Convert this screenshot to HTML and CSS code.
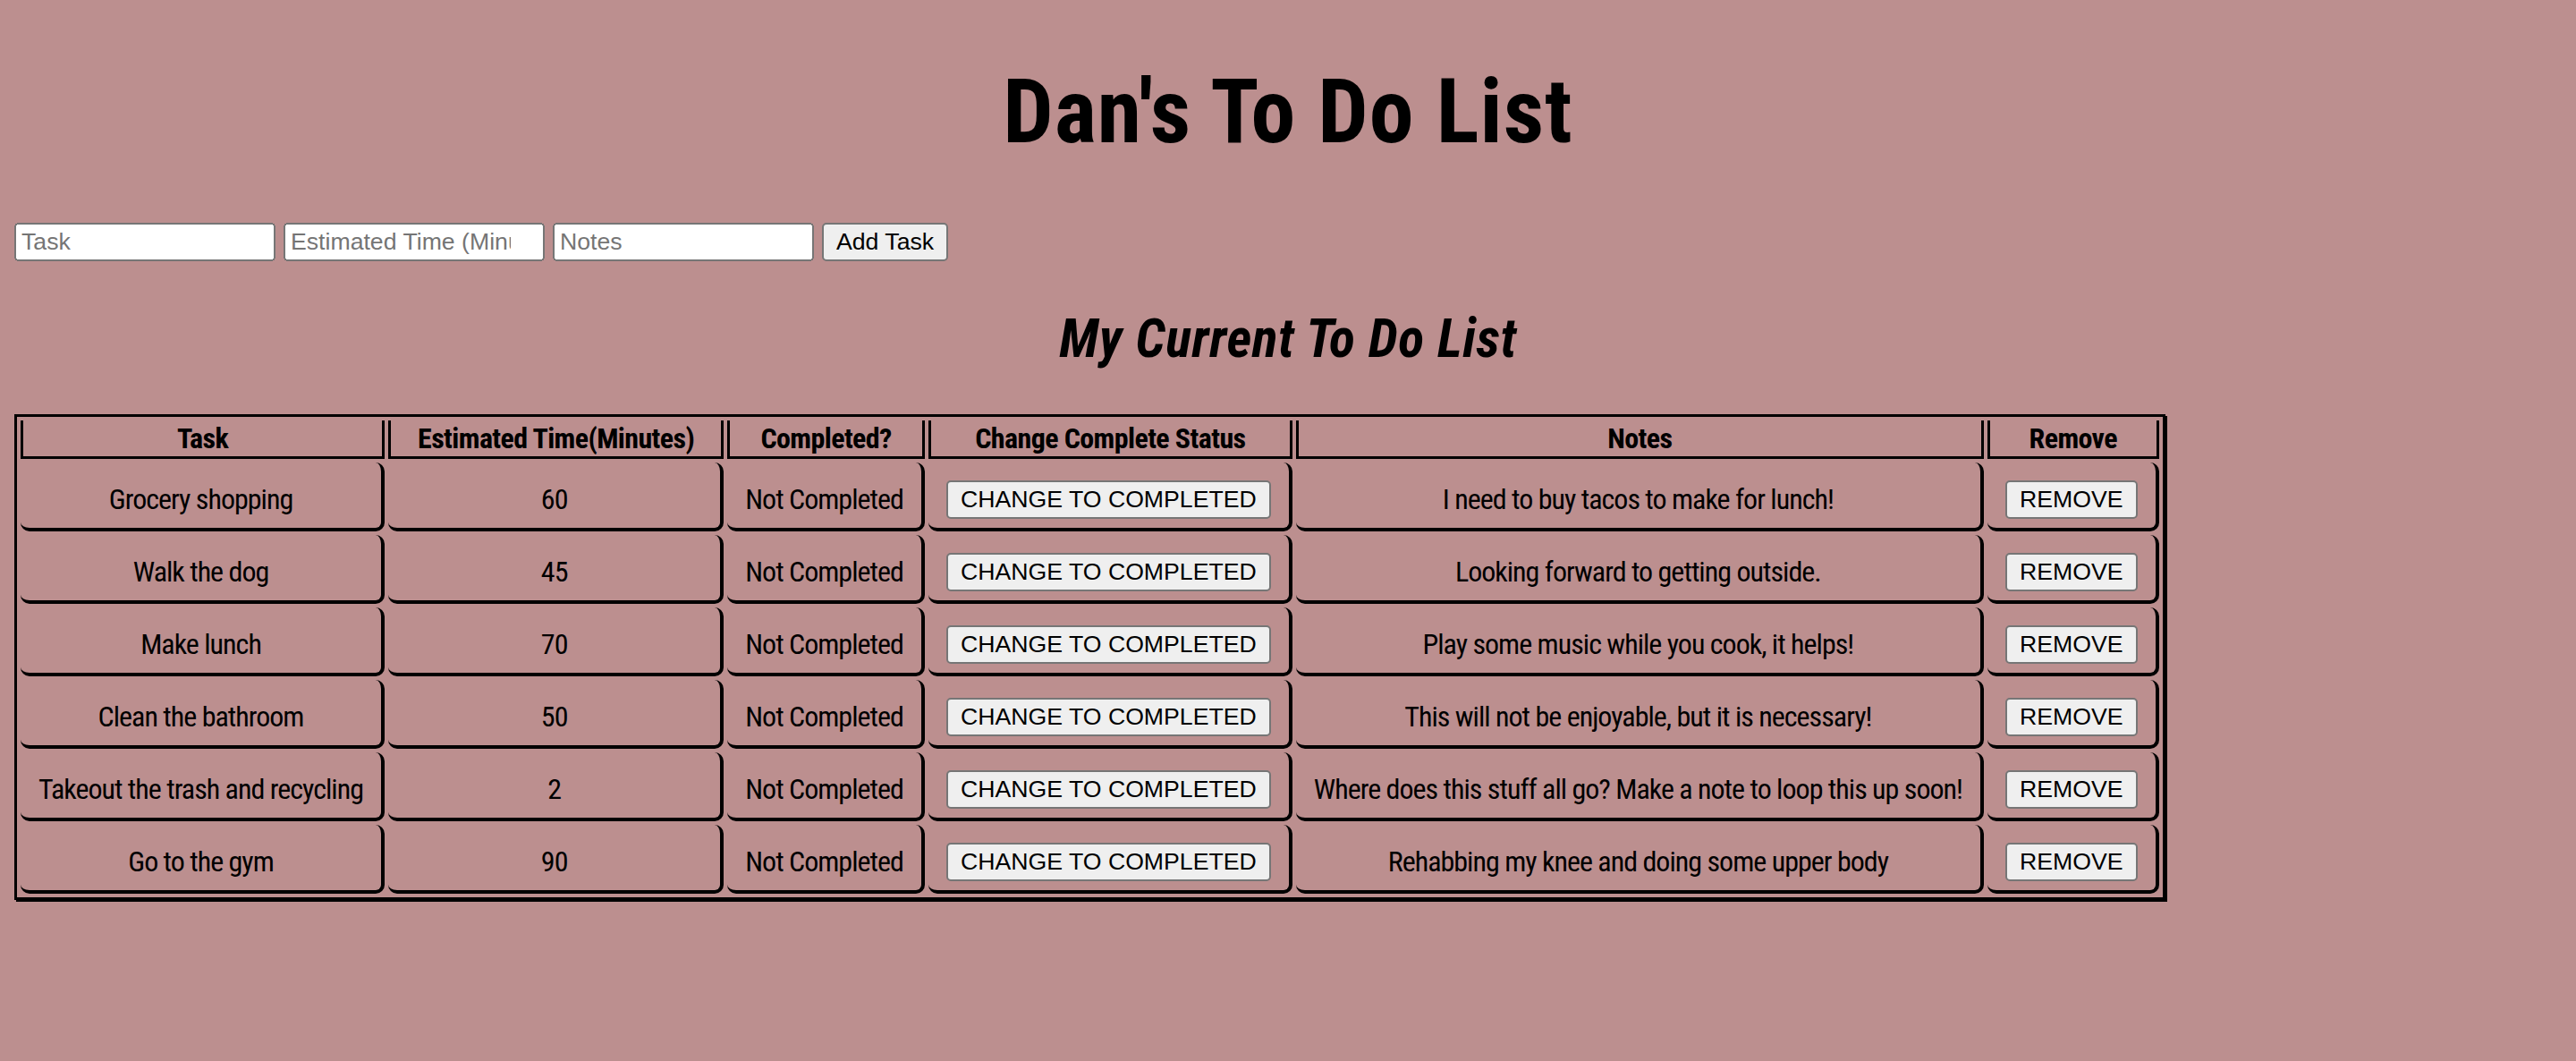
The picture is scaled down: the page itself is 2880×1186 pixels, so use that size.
FILE: index.html
```html
<!DOCTYPE html>
<html lang="en">
<head>
<meta charset="utf-8">
<title>Dan's To Do List</title>
<link rel="stylesheet" href="styles.css">
</head>
<body>
<h1 class="title">Dan's To Do List</h1>
<div class="add-form">
  <input class="field" type="text" placeholder="Task">
  <input class="field" type="number" placeholder="Estimated Time (Minutes)">
  <input class="field" type="text" placeholder="Notes">
  <button class="btn" type="button">Add Task</button>
</div>
<h2 class="subtitle">My Current To Do List</h2>
<table class="todo">
  <thead>
    <tr>
      <th>Task</th>
      <th>Estimated Time(Minutes)</th>
      <th>Completed?</th>
      <th>Change Complete Status</th>
      <th>Notes</th>
      <th>Remove</th>
    </tr>
  </thead>
  <tbody>
    <tr>
      <td>Grocery shopping</td>
      <td>60</td>
      <td>Not Completed</td>
      <td><button class="btn" type="button">CHANGE TO COMPLETED</button></td>
      <td>I need to buy tacos to make for lunch!</td>
      <td><button class="btn" type="button">REMOVE</button></td>
    </tr>
    <tr>
      <td>Walk the dog</td>
      <td>45</td>
      <td>Not Completed</td>
      <td><button class="btn" type="button">CHANGE TO COMPLETED</button></td>
      <td>Looking forward to getting outside.</td>
      <td><button class="btn" type="button">REMOVE</button></td>
    </tr>
    <tr>
      <td>Make lunch</td>
      <td>70</td>
      <td>Not Completed</td>
      <td><button class="btn" type="button">CHANGE TO COMPLETED</button></td>
      <td>Play some music while you cook, it helps!</td>
      <td><button class="btn" type="button">REMOVE</button></td>
    </tr>
    <tr>
      <td>Clean the bathroom</td>
      <td>50</td>
      <td>Not Completed</td>
      <td><button class="btn" type="button">CHANGE TO COMPLETED</button></td>
      <td>This will not be enjoyable, but it is necessary!</td>
      <td><button class="btn" type="button">REMOVE</button></td>
    </tr>
    <tr>
      <td>Takeout the trash and recycling</td>
      <td>2</td>
      <td>Not Completed</td>
      <td><button class="btn" type="button">CHANGE TO COMPLETED</button></td>
      <td>Where does this stuff all go? Make a note to loop this up soon!</td>
      <td><button class="btn" type="button">REMOVE</button></td>
    </tr>
    <tr>
      <td>Go to the gym</td>
      <td>90</td>
      <td>Not Completed</td>
      <td><button class="btn" type="button">CHANGE TO COMPLETED</button></td>
      <td>Rehabbing my knee and doing some upper body</td>
      <td><button class="btn" type="button">REMOVE</button></td>
    </tr>
  </tbody>
</table>
</body>
</html>
```
FILE: styles.css
```css
html {
  zoom: 2;
}

body {
  margin: 0;
  padding: 0 8px 8px;
  background: #bc8f8f;
  color: #000;
  font-family: "Liberation Sans Narrow", "Arial Narrow", Roboto, sans-serif;
  font-stretch: 75%;
  font-size: 16px;
  line-height: 1.15;
}

.title {
  font-size: 50px;
  font-weight: bold;
  letter-spacing: 0.5px;
  text-align: center;
  margin: 33.5px 0;
}

.add-form {
  display: flex;
  gap: 4.5px;
  align-items: center;
  padding-bottom: 1px;
}

.field,
.btn {
  font-family: "Liberation Sans", Arial, sans-serif;
  font-stretch: normal;
  font-size: 13.333px;
  line-height: normal;
  letter-spacing: normal;
}

.field {
  width: 138px;
}

.field::placeholder {
  color: #757575;
}

.subtitle {
  font-size: 30px;
  font-weight: bold;
  font-style: italic;
  letter-spacing: 0.27px;
  text-align: center;
  margin: 0.83em 0;
}

.todo {
  border: 1.5px solid #000;
  box-shadow: 1px 1px 0 #000;
  border-spacing: 2px;
}

.todo th {
  font-weight: bold;
  letter-spacing: -0.3px;
  padding: 1px 15px;
  border-left: 1.5px solid #000;
  border-right: 1.5px solid #000;
  border-bottom: 1.5px solid #000;
  text-align: center;
}

.todo td {
  letter-spacing: -0.49px;
  padding: 10px 10px 5px;
  border-right: 2px solid #000;
  border-bottom: 2px solid #000;
  border-radius: 5px;
  text-align: center;
  vertical-align: middle;
}
```
